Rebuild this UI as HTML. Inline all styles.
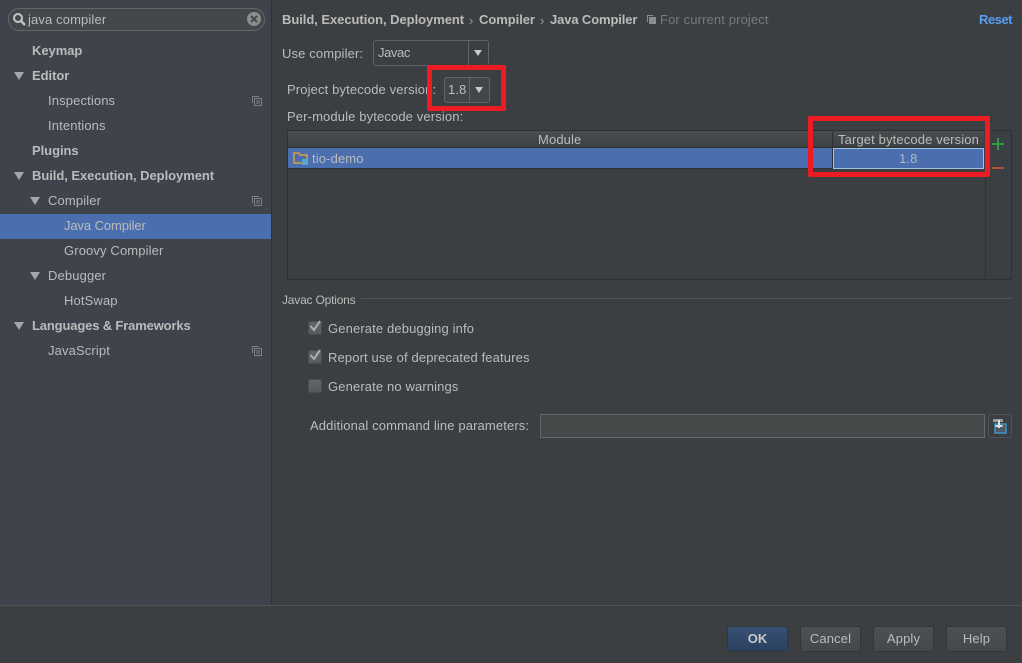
<!DOCTYPE html>
<html><head><meta charset="utf-8"><style>
html,body{margin:0;padding:0;background:#3c3f41}
#r{position:relative;width:1022px;height:663px;overflow:hidden;background:#3c3f41;font:13px/16px "Liberation Sans",sans-serif;color:#bbbbbb}
#r div,#r span.t{position:absolute;white-space:nowrap}
.t{letter-spacing:.13px;margin-top:1px}
.b{font-weight:bold;letter-spacing:-.05px;margin-top:1px}
.tri{width:0;height:0;border-left:5px solid transparent;border-right:5px solid transparent;border-top:8px solid #a5a8aa}
.tri2{width:0;height:0;border-left:4px solid transparent;border-right:4px solid transparent;border-top:6px solid #c8c8c8}
.cb{width:12px;height:12px;left:308px;background:linear-gradient(#626567,#565a5c);border:1px solid #4a4c4e;border-radius:2px}
.btn{top:626px;width:59px;height:24px;border:1px solid #333537;border-radius:3px;background:linear-gradient(#4d5052,#45484a);text-align:center;line-height:24px;color:#bbbbbb;margin-top:0!important}
</style></head><body><div id="r">
<div style="left:0;top:0;width:271px;height:605px;background:#3e434c"></div>
<div style="left:271px;top:0;width:1px;height:605px;background:#2f3133"></div>
<div style="left:8px;top:8px;width:255px;height:21px;border:1px solid #62666a;border-radius:11px;background:#45484a"></div>
<svg style="position:absolute;left:12px;top:12px" width="15" height="15"><circle cx="6" cy="6" r="4" fill="none" stroke="#c4c4c4" stroke-width="2"/><path d="M9 9l4 4" stroke="#c4c4c4" stroke-width="2.4"/></svg>
<div class="t" style="left:28px;top:11px">java compiler</div>
<svg style="position:absolute;left:247px;top:12px" width="14" height="14"><circle cx="7" cy="7" r="7" fill="#8a8c8e"/><path d="M4 4l6 6M10 4l-6 6" stroke="#45484a" stroke-width="2"/></svg>

<div class="t b" style="left:32px;top:42px">Keymap</div>
<div class="tri" style="left:14px;top:72px"></div><div class="t b" style="left:32px;top:67px">Editor</div>
<div class="t" style="left:48px;top:92px">Inspections</div>
<div class="t" style="left:48px;top:117px">Intentions</div>
<div class="t b" style="left:32px;top:142px">Plugins</div>
<div class="tri" style="left:14px;top:172px"></div><div class="t b" style="left:32px;top:167px">Build, Execution, Deployment</div>
<div class="tri" style="left:30px;top:197px"></div><div class="t" style="left:48px;top:192px">Compiler</div>
<div style="left:0;top:214px;width:271px;height:25px;background:#4b6eaf"></div>
<div class="t" style="left:64px;top:217px;letter-spacing:-.1px">Java Compiler</div>
<div class="t" style="left:64px;top:242px">Groovy Compiler</div>
<div class="tri" style="left:30px;top:272px"></div><div class="t" style="left:48px;top:267px">Debugger</div>
<div class="t" style="left:64px;top:292px">HotSwap</div>
<div class="tri" style="left:14px;top:322px"></div><div class="t b" style="left:32px;top:317px;letter-spacing:-.15px">Languages &amp; Frameworks</div>
<div class="t" style="left:48px;top:342px">JavaScript</div>
<svg style="position:absolute;left:252px;top:96px" width="10" height="10"><path d="M.5 7V.5H7M2.5 2.5h7v7h-7zM4 5h4M4 7h4" fill="none" stroke="#7c8084"/></svg>
<svg style="position:absolute;left:252px;top:196px" width="10" height="10"><path d="M.5 7V.5H7M2.5 2.5h7v7h-7zM4 5h4M4 7h4" fill="none" stroke="#7c8084"/></svg>
<svg style="position:absolute;left:252px;top:346px" width="10" height="10"><path d="M.5 7V.5H7M2.5 2.5h7v7h-7zM4 5h4M4 7h4" fill="none" stroke="#7c8084"/></svg>

<div class="t b" style="left:282px;top:11px">Build, Execution, Deployment</div>
<div class="t" style="left:469px;top:12px;color:#999">›</div>
<div class="t b" style="left:479px;top:11px">Compiler</div>
<div class="t" style="left:540px;top:12px;color:#999">›</div>
<div class="t b" style="left:550px;top:11px;letter-spacing:-.12px">Java Compiler</div>
<svg style="position:absolute;left:647px;top:15px" width="10" height="10"><path d="M.5 7V.5H6" fill="none" stroke="#8a8c8e"/><rect x="2" y="2" width="7" height="7" fill="#8a8c8e"/></svg>
<div class="t" style="left:660px;top:11px;color:#787878">For current project</div>
<div class="t b" style="left:979px;top:11px;color:#589df6;letter-spacing:-.45px">Reset</div>

<div class="t" style="left:282px;top:45px">Use compiler:</div>
<div style="left:373px;top:40px;width:114px;height:24px;border:1px solid #606365;border-radius:3px"></div>
<div style="left:468px;top:41px;width:1px;height:24px;background:#606365"></div>
<div class="t" style="left:378px;top:44px;letter-spacing:-.4px">Javac</div>
<div class="tri2" style="left:474px;top:50px"></div>

<div class="t" style="left:287px;top:81px">Project bytecode version:</div>
<div style="left:444px;top:77px;width:44px;height:24px;border:1px solid #606365;border-radius:3px;background:#434648"></div>
<div style="left:469px;top:78px;width:1px;height:24px;background:#606365"></div>
<div class="t" style="left:448px;top:81px">1.8</div>
<div class="tri2" style="left:475px;top:87px"></div>
<div style="left:427px;top:65px;width:69px;height:36px;border:5px solid #ed1c24;border-radius:2px"></div>

<div class="t" style="left:287px;top:108px">Per-module bytecode version:</div>

<div style="left:287px;top:130px;width:697px;height:148px;border:1px solid #2f3133"></div>
<div style="left:984px;top:130px;width:28px;border:1px solid #2f3133;border-left:0;box-sizing:border-box;height:150px"></div>
<div style="left:288px;top:131px;width:696px;height:16px;background:linear-gradient(#4a4d4f,#3e4143);border-bottom:1px solid #2f3133"></div>
<div style="left:832px;top:131px;width:1px;height:38px;background:#2f3133"></div>
<div class="t" style="left:538px;top:131px">Module</div>
<div class="t" style="left:838px;top:131px">Target bytecode version</div>
<div style="left:288px;top:148px;width:544px;height:21px;background:#4b6eaf;border-bottom:1px solid #2f3133;box-sizing:border-box"></div>
<div style="left:833px;top:148px;width:149px;height:19px;background:#4b6eaf;border:1px solid #a0c4e8"></div>
<svg style="position:absolute;left:293px;top:152px" width="16" height="13"><path d="M1 1h5l1 2h7v8H1z" fill="none" stroke="#b89358" stroke-width="2"/><rect x="9" y="7" width="6" height="6" fill="#5aa5cf"/></svg>
<div class="t" style="left:312px;top:150px">tio-demo</div>
<div class="t" style="left:899px;top:150px;color:#b0b8c8">1.8</div>
<div style="left:808px;top:116px;width:172px;height:51px;border:5px solid #ed1c24;border-radius:2px"></div>
<svg style="position:absolute;left:991px;top:137px" width="14" height="14"><path d="M7 1v12M1 7h12" stroke="#2f9e44" stroke-width="2"/></svg>
<div style="left:992px;top:167px;width:12px;height:2px;background:#b5503f"></div>

<div class="t" style="left:282px;top:291px;font-size:12px;letter-spacing:-.2px">Javac Options</div>
<div style="left:361px;top:298px;width:650px;height:1px;background:#54575a"></div>

<div class="cb" style="top:321px"></div>
<svg style="position:absolute;left:309px;top:319px" width="14" height="14"><path d="M1.5 7l3.5 4 6-9" fill="none" stroke="#b0b0b0" stroke-width="2"/></svg>
<div class="t" style="left:328px;top:320px">Generate debugging info</div>
<div class="cb" style="top:350px"></div>
<svg style="position:absolute;left:309px;top:348px" width="14" height="14"><path d="M1.5 7l3.5 4 6-9" fill="none" stroke="#b0b0b0" stroke-width="2"/></svg>
<div class="t" style="left:328px;top:349px">Report use of deprecated features</div>
<div class="cb" style="top:379px"></div>
<div class="t" style="left:328px;top:378px">Generate no warnings</div>

<div class="t" style="left:310px;top:417px">Additional command line parameters:</div>
<div style="left:540px;top:414px;width:443px;height:22px;border:1px solid #646769;background:#45494a"></div>
<div style="left:988px;top:414px;width:22px;height:22px;border:1px solid #505355;border-radius:3px"></div>
<svg style="position:absolute;left:992px;top:417px" width="16" height="17"><rect x="1" y="2" width="10" height="3" fill="#999"/><rect x="3" y="7" width="11" height="9" fill="#4a5a66" stroke="#3d9bd0" stroke-width="1.4"/><path d="M7 3v8M3.5 9h7" stroke="#e0e0e0" stroke-width="2"/></svg>

<div style="left:0;top:605px;width:1022px;height:1px;background:#505355"></div>
<div class="btn b" style="left:727px;background:linear-gradient(#385074,#29405f);color:#c8c8c8">OK</div>
<div class="btn t" style="left:800px">Cancel</div>
<div class="btn t" style="left:873px">Apply</div>
<div class="btn t" style="left:946px">Help</div>
</div></body></html>
